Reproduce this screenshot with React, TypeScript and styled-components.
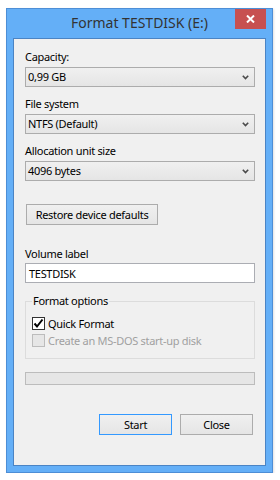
import React from 'react'
import styled, { createGlobalStyle } from 'styled-components'

const Global = createGlobalStyle`
	html, body {
		margin: 0;
		background: #ffffff;
	}
	#root {
		padding: 8px 0 0 6px;
	}
`

const Window = styled.div`
	width: 267px;
	height: 465px;
	box-sizing: border-box;
	border: 1px solid #4d8ed6;
	background: #64aff7;
	padding: 0 6px 6px 6px;
	display: flex;
	flex-direction: column;
	box-shadow: 1px 1px 2px rgba(0, 0, 0, 0.12);
	font-family: "Noto Sans", "Open Sans", sans-serif;
	font-size: 11px;
	letter-spacing: -0.3px;
	color: #000;
`

const TitleBar = styled.div`
	height: 29px;
	display: grid;
	grid-template-columns: 31px 1fr 31px;
	align-items: start;
`

const Title = styled.div`
	grid-column: 2;
	text-align: center;
	font-size: 14px;
	letter-spacing: 0;
	line-height: 27px;
	color: #333333;
	white-space: nowrap;
`

const CloseBox = styled.div`
	grid-column: 3;
	width: 31px;
	height: 20px;
	background: #c75050;
	display: flex;
	align-items: center;
	justify-content: center;
`

const Client = styled.div`
	flex: 1;
	background: #f0f0f0;
	border: 1px solid #4b84c4;
	padding: 10px 10px 0 11px;
	display: flex;
	flex-direction: column;
	align-items: flex-start;
`

const FieldLabel = styled.div<{ $top: number }>`
	margin-top: ${p => p.$top}px;
	line-height: 16px;
	white-space: nowrap;
`

const Combo = styled.div`
	margin-top: 2px;
	width: 230px;
	height: 20px;
	box-sizing: border-box;
	border: 1px solid #acacac;
	background: linear-gradient(#f0f0f0, #e5e5e5);
	display: flex;
	align-items: center;
	justify-content: space-between;
	padding: 0 5px 0 2px;
	line-height: 16px;
`

const PushButton = styled.div<{ $width: number; $primary?: boolean }>`
	width: ${p => p.$width}px;
	height: 21px;
	box-sizing: border-box;
	border: 1px solid ${p => p.$primary ? '#3399ff' : '#acacac'};
	background: linear-gradient(#f0f0f0, #e5e5e5);
	display: flex;
	align-items: center;
	justify-content: center;
	white-space: nowrap;
`

const RestoreButton = styled(PushButton)`
	margin: 23px 0 0 1px;
`

const TextBox = styled.div`
	margin-top: 1px;
	width: 230px;
	height: 20px;
	box-sizing: border-box;
	border: 1px solid #abadb3;
	background: #ffffff;
	padding: 0 3px;
	display: flex;
	align-items: center;
`

const GroupBox = styled.fieldset`
	margin: 10px 0 0 0;
	width: 230px;
	box-sizing: border-box;
	border: 1px solid #dcdcdc;
	padding: 6px 6px 9px 6px;
	min-inline-size: 0;
`

const GroupLegend = styled.legend`
	padding: 0 1px;
	line-height: 16px;
`

const CheckRow = styled.div<{ $disabled?: boolean }>`
	height: 17px;
	display: flex;
	align-items: center;
	gap: 3px;
	color: ${p => p.$disabled ? '#a0a0a0' : '#000000'};
	white-space: nowrap;
`

const CheckBox = styled.div<{ $disabled?: boolean }>`
	width: 13px;
	height: 13px;
	box-sizing: border-box;
	border: 1px solid ${p => p.$disabled ? '#bcbcbc' : '#333333'};
	background: ${p => p.$disabled ? '#e6e6e6' : '#ffffff'};
	display: flex;
	align-items: center;
	justify-content: center;
`

const Progress = styled.div`
	margin-top: 13px;
	width: 230px;
	height: 13px;
	box-sizing: border-box;
	border: 1px solid #bcbcbc;
	background: #e6e6e6;
`

const ButtonRow = styled.div`
	margin-top: 29px;
	width: 230px;
	box-sizing: border-box;
	padding-right: 2px;
	display: flex;
	justify-content: flex-end;
	gap: 8px;
`

function Chevron() {
	return <svg width="7" height="5" viewBox="0 0 7 5">
		<polyline points="0.8,0.8 3.5,3.6 6.2,0.8" fill="none" stroke="#4a4a4a" strokeWidth="1.6"/>
	</svg>
}

function Check() {
	return <svg width="11" height="11" viewBox="0 0 11 11">
		<polyline points="1.5,5.5 4,8.5 9.5,1.5" fill="none" stroke="#000" strokeWidth="2"/>
	</svg>
}

function Field({ label, value, top }: { label: string, value: string, top: number }) {
	return <>
		<FieldLabel $top={top}>{label}</FieldLabel>
		<Combo>
			<span>{value}</span>
			<Chevron/>
		</Combo>
	</>
}

export default function App() {
	return <>
		<Global/>
		<Window>
			<TitleBar>
				<Title>Format TESTDISK (E:)</Title>
				<CloseBox>
					<svg width="9" height="8" viewBox="0 0 9 8">
						<path d="M1 0.5 L8 7.5 M8 0.5 L1 7.5" stroke="#ffffff" strokeWidth="2"/>
					</svg>
				</CloseBox>
			</TitleBar>
			<Client>
				<Field label="Capacity:" value="0,99 GB" top={0}/>
				<Field label="File system" value="NTFS (Default)" top={9}/>
				<Field label="Allocation unit size" value="4096 bytes" top={9}/>
				<RestoreButton $width={132}>Restore device defaults</RestoreButton>
				<FieldLabel $top={21}>Volume label</FieldLabel>
				<TextBox>TESTDISK</TextBox>
				<GroupBox>
					<GroupLegend>Format options</GroupLegend>
					<CheckRow>
						<CheckBox><Check/></CheckBox>
						<span>Quick Format</span>
					</CheckRow>
					<CheckRow $disabled>
						<CheckBox $disabled/>
						<span>Create an MS-DOS start-up disk</span>
					</CheckRow>
				</GroupBox>
				<Progress/>
				<ButtonRow>
					<PushButton $width={73} $primary>Start</PushButton>
					<PushButton $width={73}>Close</PushButton>
				</ButtonRow>
			</Client>
		</Window>
	</>
}
